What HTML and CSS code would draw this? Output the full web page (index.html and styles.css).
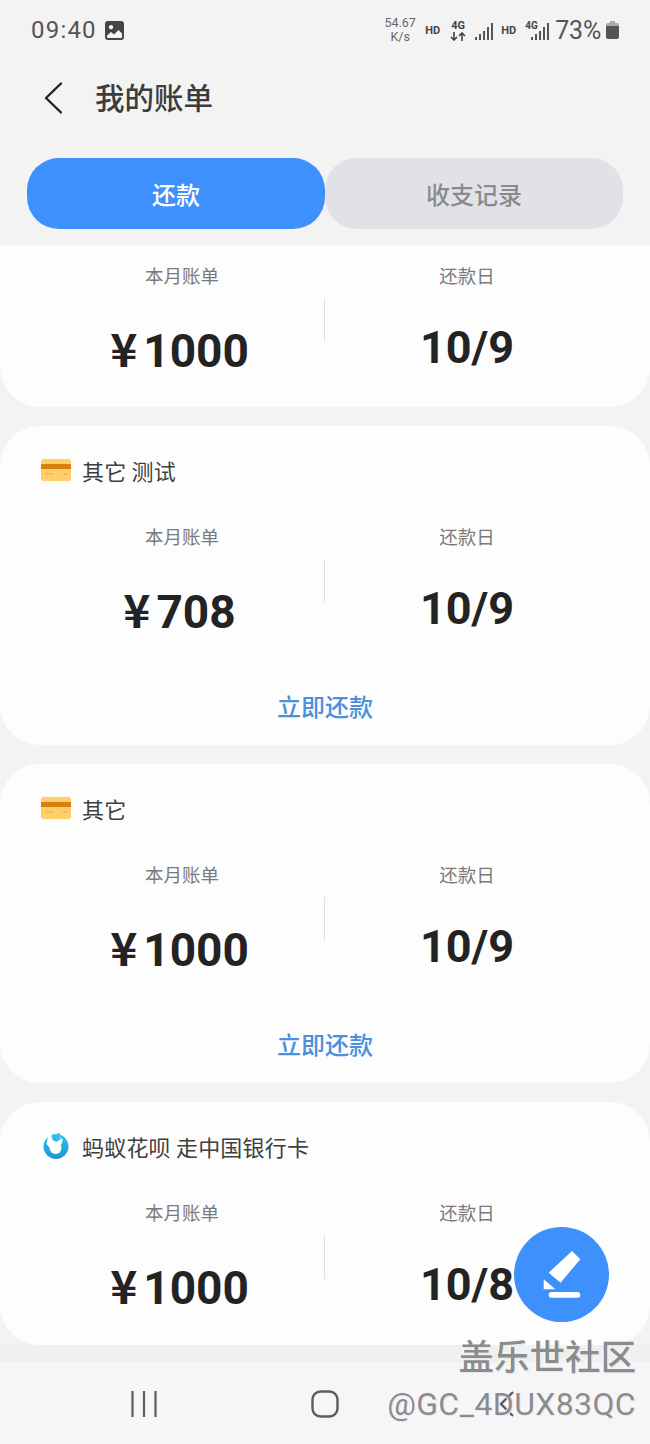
FILE: index.html
```html
<!DOCTYPE html>
<html lang="zh">
<head>
<meta charset="utf-8">
<title>我的账单</title>
<link rel="stylesheet" href="styles.css">
</head>
<body>
<div class="screen">
  <div class="status">
    <div class="status-left">
      <span class="time">09:40</span>
      <svg class="pic" viewBox="0 0 19 19"><path fill-rule="evenodd" d="M3 0h13a3 3 0 0 1 3 3v13a3 3 0 0 1-3 3H3a3 3 0 0 1-3-3V3a3 3 0 0 1 3-3zM2 14.500v1.500a1 1 0 0 0 1 1h13a1 1 0 0 0 1-1v-3.500l-3.500-3.500-4.500 4.500-3-2.500zM6 4a2.200 2.200 0 1 0 .01 0z" fill="#444"/></svg>
    </div>
    <div class="status-right">
      <div class="speed"><span>54.67</span><span>K/s</span></div>
      <span class="hd">HD</span>
      <div class="net">
        <span class="net-label">4G</span>
        <svg class="arrows" viewBox="0 0 16 9"><path d="M4 0v8M1 5l3 3 3-3M12 9V1M9 4l3-3 3 3" fill="none" stroke="#444" stroke-width="1.600"/></svg>
      </div>
      <svg class="signal" viewBox="0 0 18 17"><path d="M0 14h2v3H0zM4 11h2v6H4zM8 8h2v9H8zM12 4h2v13h-2zM16 0h2v17h-2z" fill="#555"/></svg>
      <span class="hd hd-two">HD</span>
      <div class="net-signal">
        <span class="net-label small">4G</span>
        <svg class="signal wide" viewBox="0 0 18 17"><path d="M0 14h2v3H0zM4 11h2v6H4zM8 8h2v9H8zM12 4h2v13h-2zM16 0h2v17h-2z" fill="#555"/></svg>
      </div>
      <span class="percent">73%</span>
      <svg class="battery" viewBox="0 0 13 18"><path d="M4 0h5v2H4z" fill="#aaa"/><path d="M2 2h9a2 2 0 0 1 2 2v1H0V4a2 2 0 0 1 2-2z" fill="#aaa"/><path d="M0 5h13v11a2 2 0 0 1-2 2H2a2 2 0 0 1-2-2z" fill="#555"/></svg>
    </div>
  </div>

  <div class="header">
    <svg class="back" viewBox="0 0 18 32"><path d="M17 1.500 2 16l15 14.500" fill="none" stroke="#222" stroke-width="2.400" stroke-linecap="round" stroke-linejoin="round"/></svg>
    <h1 class="title">我的账单</h1>
  </div>

  <div class="tabs">
    <div class="tab tab-active">还款</div>
    <div class="tab">收支记录</div>
  </div>

  <div class="list">
    <section class="card card-first">
      <div class="stats">
        <div class="stat">
          <div class="label">本月账单</div>
          <div class="amount"><span class="yen">¥</span>1000</div>
        </div>
        <div class="divider"></div>
        <div class="stat">
          <div class="label">还款日</div>
          <div class="date">10/9</div>
        </div>
      </div>
    </section>

    <section class="card">
      <div class="card-title">
        <svg class="bank-icon" viewBox="0 0 30 22"><rect width="30" height="22" rx="2.500" fill="#fdd069"/><rect y="5" width="30" height="5" fill="#d97f10"/><rect x="4" y="14" width="9" height="1.500" fill="#f0bb58"/><rect x="22" y="14" width="4" height="2" fill="#f0bb58"/></svg>
        <span>其它 测试</span>
      </div>
      <div class="stats">
        <div class="stat">
          <div class="label">本月账单</div>
          <div class="amount"><span class="yen">¥</span>708</div>
        </div>
        <div class="divider"></div>
        <div class="stat">
          <div class="label">还款日</div>
          <div class="date">10/9</div>
        </div>
      </div>
      <div class="pay">立即还款</div>
    </section>

    <section class="card">
      <div class="card-title">
        <svg class="bank-icon" viewBox="0 0 30 22"><rect width="30" height="22" rx="2.500" fill="#fdd069"/><rect y="5" width="30" height="5" fill="#d97f10"/><rect x="4" y="14" width="9" height="1.500" fill="#f0bb58"/><rect x="22" y="14" width="4" height="2" fill="#f0bb58"/></svg>
        <span>其它</span>
      </div>
      <div class="stats">
        <div class="stat">
          <div class="label">本月账单</div>
          <div class="amount"><span class="yen">¥</span>1000</div>
        </div>
        <div class="divider"></div>
        <div class="stat">
          <div class="label">还款日</div>
          <div class="date">10/9</div>
        </div>
      </div>
      <div class="pay">立即还款</div>
    </section>

    <section class="card card-last">
      <div class="card-title">
        <svg class="brand-icon" viewBox="0 0 26 26"><defs><linearGradient id="hb" x1="0" y1="0" x2="0" y2="1"><stop offset="0" stop-color="#35c3ee"/><stop offset="1" stop-color="#1a94d8"/></linearGradient></defs><circle cx="13" cy="13.500" r="12.500" fill="url(#hb)"/><circle cx="12.500" cy="15" r="6" fill="#fdfdfe"/><path d="M5.500 0 9 0C8 4 9 8 13 8.500c3 .3 3.500-2.500 3-4.500l3.500 2c.5 3-1 6-3 7l-8 4-5-6z" fill="#fdfdfe"/><path d="M13 5.500c1.500 1.500 3.500 1 4-.5" fill="none" stroke="#35c3ee" stroke-width="2"/><circle cx="15.500" cy="1.800" r="1.800" fill="#35c3ee"/></svg>
        <span>蚂蚁花呗 走中国银行卡</span>
      </div>
      <div class="stats">
        <div class="stat">
          <div class="label">本月账单</div>
          <div class="amount"><span class="yen">¥</span>1000</div>
        </div>
        <div class="divider"></div>
        <div class="stat">
          <div class="label">还款日</div>
          <div class="date">10/8</div>
        </div>
      </div>
    </section>
  </div>

  <div class="spacer"></div>

  <nav class="nav">
    <div class="nav-item"><svg class="nav-icon" viewBox="0 0 28 28"><path d="M2.500 1v26M14 1v26M25.500 1v26" fill="none" stroke="#5d5d5f" stroke-width="2.200"/></svg></div>
    <div class="nav-item"><svg class="nav-icon" viewBox="0 0 28 28"><rect x="1.500" y="1.500" width="25" height="25" rx="8" fill="none" stroke="#5d5d5f" stroke-width="2.400"/></svg></div>
    <div class="nav-item"><svg class="nav-icon" viewBox="0 0 28 28"><path d="M21 2 9 14l12 12" fill="none" stroke="#5d5d5f" stroke-width="2.400"/></svg></div>
  </nav>

  <button class="fab" type="button" aria-label="记账">
    <svg class="fab-icon" viewBox="0 0 38 47"><path d="M29 0 37.300 8.300 17.500 31.700 5.700 21.700z" fill="#fff"/><path d="M.7 28.300 12.300 38.300H.7z" fill="#fff"/><rect x="5.700" y="41" width="31.600" height="5.700" rx="2.800" fill="#fff"/></svg>
  </button>

  <div class="watermark">
    <div class="wm-main">盖乐世社区</div>
    <div class="wm-sub">@GC_4DUX83QC</div>
  </div>
</div>
</body>
</html>
```
FILE: styles.css
```css
* {
  box-sizing: border-box;
}

html,
body {
  margin: 0;
  padding: 0;
}

body {
  font-family: "Noto Sans CJK SC", "Roboto", sans-serif;
  color: #333;
}

.screen {
  position: relative;
  width: 650px;
  height: 1444px;
  overflow: hidden;
  background: #f3f3f4;
  display: flex;
  flex-direction: column;
}

/* status bar */
.status {
  height: 60px;
  flex: none;
  display: flex;
  justify-content: space-between;
  align-items: center;
  padding: 0 31px;
  font-family: "Roboto", sans-serif;
  color: #555;
}

.status-left {
  display: flex;
  align-items: center;
  gap: 8px;
}

.time {
  font-size: 24px;
  letter-spacing: 1.200px;
  color: #555;
}

.pic {
  width: 19px;
  height: 19px;
}

.status-right {
  display: flex;
  align-items: center;
}

.speed {
  display: flex;
  flex-direction: column;
  align-items: center;
  width: 34px;
  margin-right: 1px;
  font-size: 12.500px;
  line-height: 14px;
  color: #666;
}

.hd {
  width: 17px;
  margin-left: 6px;
  font-size: 11px;
  font-weight: 700;
  color: #444;
  text-align: center;
}

.hd-two {
  margin-left: 7px;
}

.net {
  display: flex;
  flex-direction: column;
  align-items: center;
  width: 16px;
  margin-left: 9px;
}

.net-label {
  font-size: 11px;
  line-height: 11px;
  font-weight: 700;
  color: #444;
}

.arrows {
  width: 16px;
  height: 9px;
  margin-top: 1px;
}

.signal {
  width: 18px;
  height: 17px;
  margin-left: 9px;
  margin-top: 3px;
}

.net-signal {
  position: relative;
  display: flex;
  align-items: center;
  width: 24px;
  margin-left: 8px;
}

.signal.wide {
  width: 18px;
  margin-left: 6px;
  margin-top: 3px;
}

.net-label.small {
  position: absolute;
  top: 1px;
  left: 0;
  font-size: 10px;
  line-height: 10px;
}

.percent {
  margin-left: 6px;
  font-size: 25px;
  color: #555;
  letter-spacing: -0.2px;
}

.battery {
  width: 13px;
  height: 18px;
  margin-left: 5px;
}

/* header */
.header {
  height: 76px;
  flex: none;
  display: flex;
  align-items: center;
  padding-left: 44px;
}

.back {
  width: 18px;
  height: 32px;
}

.title {
  margin: -4px 0 0 33px;
  font-size: 29.500px;
  font-weight: 500;
  color: #3c3c3c;
}

/* tabs */
.tabs {
  flex: none;
  display: flex;
  margin: 22px 27px 16px;
}

.tab {
  flex: 1;
  height: 71px;
  border-radius: 32px;
  background: #e1e2e7;
  color: #8a8a8a;
  font-size: 24px;
  font-weight: 500;
  line-height: 71px;
  text-align: center;
}

.tab-active {
  background: #3e90fd;
  color: #fff;
}

/* list */
.list {
  flex: none;
  height: 1100px;
  overflow: hidden;
  display: flex;
  flex-direction: column;
  gap: 19px;
}

.card {
  flex: none;
  background: #fdfdfe;
  border-radius: 40px;
  padding: 31px 0 26px;
}

.card-first {
  padding-top: 17px;
  border-radius: 0 0 40px 40px;
}

.card-last {
  padding-bottom: 27px;
}

.card-title {
  display: flex;
  align-items: center;
  height: 26px;
  padding-left: 41px;
  margin-bottom: 40px;
  font-size: 22px;
  line-height: 26px;
  letter-spacing: 0.200px;
  color: #3f3f3f;
}

.bank-icon {
  width: 30px;
  height: 22px;
  margin-right: 11px;
  flex: none;
}

.brand-icon {
  width: 26px;
  height: 26px;
  margin-left: 2px;
  margin-right: 13px;
  flex: none;
}

.stats {
  display: grid;
  grid-template-columns: 1fr 1px 1fr;
  align-items: start;
  padding: 0 41px 0 40px;
}

.stat {
  text-align: center;
}

.label {
  height: 26px;
  font-size: 18.500px;
  line-height: 26px;
  color: #7a7a7a;
}

.amount,
.date {
  height: 60px;
  font-family: "Roboto", "Noto Sans CJK SC", sans-serif;
  font-weight: 700;
  font-size: 46px;
  line-height: 60px;
  color: #232323;
}

.amount {
  margin-top: 33px;
  margin-right: 5px;
}

.yen {
  font-family: "Noto Sans CJK SC", sans-serif;
  font-size: 46px;
  line-height: 0;
  margin-right: 6px;
}

.date {
  margin-top: 30px;
  font-size: 45px;
}

.divider {
  width: 1px;
  height: 44px;
  margin-top: 36px;
  background: #dde2ea;
}

.pay {
  margin-top: 49px;
  margin-bottom: -2px;
  font-size: 24px;
  font-weight: 500;
  line-height: 30px;
  text-align: center;
  color: #4a90dc;
}

/* bottom */
.spacer {
  flex: none;
  height: 18px;
  background: #f0f0f1;
}

.nav {
  flex: none;
  height: 81px;
  display: flex;
  justify-content: center;
  align-items: center;
  background: #f6f6f8;
  border-top: 1px solid #f9f9fa;
}

.nav-item {
  width: 181px;
  display: flex;
  justify-content: center;
}

.nav-icon {
  width: 28px;
  height: 28px;
}

.fab {
  position: absolute;
  left: 514px;
  top: 1227px;
  width: 95px;
  height: 95px;
  padding: 0;
  border: 0;
  border-radius: 50%;
  background: #3e90fd;
  display: flex;
  align-items: center;
  justify-content: center;
}

.fab-icon {
  width: 38px;
  height: 47px;
}

.watermark {
  position: absolute;
  right: 14px;
  top: 1332px;
  text-align: right;
  color: #8c8c8c;
  text-shadow: 1px 1px 0 #e8e8e8, -1px 0 0 #fff;
}

.wm-main {
  font-size: 35.500px;
  line-height: 46px;
  font-weight: 500;
}

.wm-sub {
  font-family: "Roboto", sans-serif;
  margin-top: 4px;
  font-size: 31.800px;
  line-height: 44px;
  letter-spacing: 0.5px;
}
```
